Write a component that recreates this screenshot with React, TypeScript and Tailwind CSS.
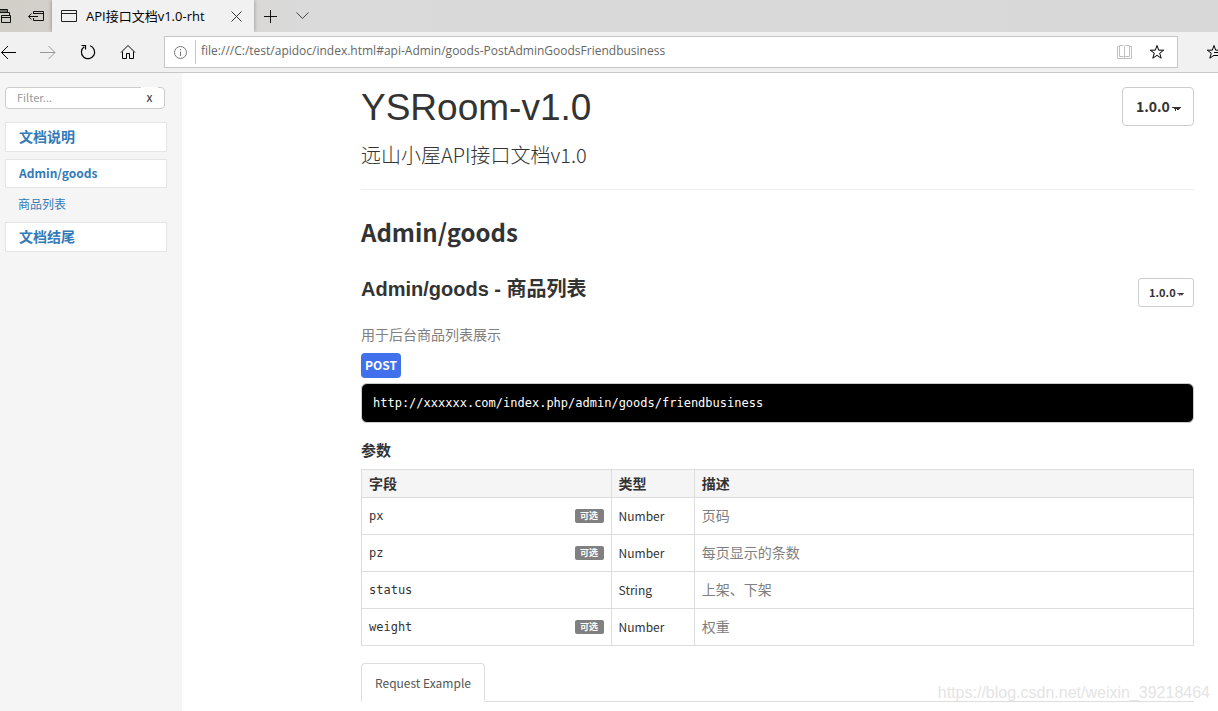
import React, { useState } from "react";

const params = [
  { field: "px", optional: true, type: "Number", desc: "页码" },
  { field: "pz", optional: true, type: "Number", desc: "每页显示的条数" },
  { field: "status", optional: false, type: "String", desc: "上架、下架" },
  { field: "weight", optional: true, type: "Number", desc: "权重" },
];

const Caret: React.FC<{ className: string }> = ({ className }) => (
  <svg
    className={`pointer-events-none absolute top-1/2 ${className}`}
    viewBox="0 0 9 4"
    fill="#333"
  >
    <path d="M0 0h9v1H8v1H7v1H5V2H4v2H3V2H2V1H0z" />
  </svg>
);

const TabStrip: React.FC = () => (
  <div className="flex h-8 bg-gradient-to-r from-[#d2cec8] via-[#dadada] via-25% to-[#d8d8d8]">
    <div className="flex w-[52px] items-center justify-between pr-2">
      <button aria-label="Tabs you set aside">
        <svg width="12" height="16" viewBox="0 0 12 16" fill="none" stroke="#111">
          <path d="M0 1.5h7.5v3M0 4.5h9.5v3M0 3h7M1.5 7.5h9v7h-9zM1.5 9.5h9" />
        </svg>
      </button>
      <button aria-label="Set these tabs aside">
        <svg width="16" height="12" viewBox="0 0 16 12" fill="none" stroke="#111">
          <path d="M5.500 4V1.500h10v9h-10V8M5.500 3.500h10M10 6.500H.8M3.500 3.500l-3 3 3 3" />
        </svg>
      </button>
    </div>
    <div className="flex w-[202px] items-center bg-[#f1f1f1] pl-[9px] pr-3 shadow-[0_0_4px_rgba(0,0,0,0.35)]">
      <svg width="16" height="14" viewBox="0 0 16 14" fill="none" stroke="#222">
        <path d="M.5 1.500h15v11H.5zM.5 4.500h15" />
      </svg>
      <span className="ml-[9px] flex-1 whitespace-nowrap text-[13px] leading-4 text-black">
        API接口文档v1.0-rht
      </span>
      <button aria-label="Close tab">
        <svg width="11" height="11" viewBox="0 0 11 11" stroke="#333">
          <path d="M.5.5l10 10M10.500.5l-10 10" />
        </svg>
      </button>
    </div>
    <button aria-label="New tab" className="ml-[10px]">
      <svg width="13" height="13" viewBox="0 0 13 13" stroke="#111">
        <path d="M6.500 0v13M0 6.500h13" />
      </svg>
    </button>
    <button aria-label="Tab previews" className="ml-[19px]">
      <svg width="13" height="8" viewBox="0 0 13 8" fill="none" stroke="#444">
        <path d="M.5.5l6 6 6-6" />
      </svg>
    </button>
  </div>
);

const Toolbar: React.FC = () => (
  <div className="relative flex h-[41px] items-center border-b border-[#c8c8c8] bg-[#f1f1f1]">
    <div className="flex w-[164px] items-center">
      <button aria-label="Back">
        <svg width="16" height="14" viewBox="0 0 16 14" fill="none" stroke="#000">
          <path d="M16 7.500H1.500M8 1L1.500 7.500 8 14" />
        </svg>
      </button>
      <button aria-label="Forward" className="ml-6">
        <svg width="16" height="14" viewBox="0 0 16 14" fill="none" stroke="#999">
          <path d="M0 7.500h15M8.500 1L15 7.500 8.500 14" />
        </svg>
      </button>
      <button aria-label="Refresh" className="ml-6">
        <svg width="16" height="16" viewBox="0 0 16 16" fill="none" stroke="#000" strokeWidth="1.2">
          <path d="M10 1.800A6.600 6.600 0 1 1 4.200 2.700M5.500 5.500V1.500H1.500" />
        </svg>
      </button>
      <button aria-label="Home" className="ml-6">
        <svg width="16" height="16" viewBox="0 0 16 16" fill="none" stroke="#000">
          <path d="M1 8.500l7-7 7 7M2.500 7.500v7h4v-5h3v5h4v-7" />
        </svg>
      </button>
    </div>
    <div className="flex h-8 min-w-0 flex-1 items-center border border-[#c6c6c6] bg-white">
      <svg className="ml-[9px]" width="13" height="13" viewBox="0 0 13 13" fill="none" stroke="#777">
        <circle cx="6.500" cy="6.500" r="6" />
        <path d="M6.500 5.500V10M6.500 3v1.200" />
      </svg>
      <input
        aria-label="Address"
        className="ml-2 h-6 min-w-0 flex-1 border-l border-[#c6c6c6] pb-1 pl-[5px] text-[12px] leading-5 text-[#666] outline-none"
        defaultValue="file:///C:/test/apidoc/index.html#api-Admin/goods-PostAdminGoodsFriendbusiness"
      />
      <button aria-label="Reading view">
        <svg width="15" height="14" viewBox="0 0 15 14" fill="none" stroke="#c0c0c0">
          <path d="M2.500.5h4l1 1 1-1h4v11h-4l-1 1-1-1h-4zM7.500 1.500v11M2.500 1.500h-2v12h14v-12h-2" />
        </svg>
      </button>
      <button aria-label="Add to favorites" className="ml-[17px] mr-3">
        <svg width="16" height="16" viewBox="0 0 16 16" fill="none" stroke="#000">
          <path d="M8 1.500l1.700 4.700h5L10.700 9.200l1.500 5L8 11.300l-4.200 2.900 1.500-5L1.300 6.200h5z" />
        </svg>
      </button>
    </div>
    <div className="flex w-10 justify-end overflow-hidden">
      <svg width="12" height="16" viewBox="0 0 12 16" fill="none" stroke="#000">
        <path d="M12 6.200H9.700L8 1.500 6.300 6.200h-5L5.300 9.200l-1.500 5L8 11.300M8 8.500h4M8 11.500h4" />
      </svg>
    </div>
  </div>
);

const Sidebar: React.FC = () => {
  const [filter, setFilter] = useState("");

  return (
    <nav className="w-[182px] shrink-0 bg-[#f5f5f5] pl-[5px] pt-[14px] font-['Noto_Sans_CJK_SC',sans-serif] text-[#337ab7]">
      <div className="relative w-40">
        <input
          aria-label="Filter"
          placeholder="Filter..."
          value={filter}
          onChange={(e) => setFilter(e.target.value)}
          className="block h-[22px] w-full rounded border border-[#ccc] bg-white pb-0.5 pl-[11px] pr-6 text-[11px] text-[#555] outline-none placeholder:text-[#999]"
        />
        <button
          onClick={() => setFilter("")}
          className="absolute right-[7px] top-0 h-5 w-[17px] bg-white text-[12px] leading-5 text-[#333]"
        >
          x
        </button>
      </div>
      <ul className="mt-[13px] w-[162px]">
        <li className="border border-[#e5e5e5] bg-white">
          <a href="#api-_header" className="block pb-0.5 pl-[13px] text-[14px] font-bold leading-[26px]">
            文档说明
          </a>
        </li>
        <li className="mt-[7px] border border-[#e5e5e5] bg-white">
          <a href="#api-Admin/goods" className="block pb-px pl-[13px] text-[12px] font-bold leading-[26px]">
            Admin/goods
          </a>
        </li>
        <li>
          <a href="#api-Admin/goods-list" className="block pb-0.5 pl-[13px] text-[12px] leading-8">
            商品列表
          </a>
        </li>
        <li className="border border-[#e5e5e5] bg-white">
          <a href="#api-_footer" className="block pb-0.5 pl-[13px] text-[14px] font-bold leading-[26px]">
            文档结尾
          </a>
        </li>
      </ul>
    </nav>
  );
};

const ParamTable: React.FC = () => (
  <table className="w-full table-fixed border-collapse text-[12px] leading-5">
    <thead>
      <tr className="bg-[#f5f5f5] text-left text-[14px]">
        <th className="h-7 w-[30%] border border-[#ddd] px-[7px] pb-0.5">字段</th>
        <th className="w-[10%] border border-[#ddd] px-[7px] pb-0.5">类型</th>
        <th className="w-[60%] border border-[#ddd] px-[7px] pb-0.5">描述</th>
      </tr>
    </thead>
    <tbody>
      {params.map((p) => (
        <tr key={p.field}>
          <td className="h-[37px] border border-[#ddd] px-[7px]">
            <div className="flex items-center justify-between">
              <code className="font-['DejaVu_Sans_Mono',monospace] text-[12px]">{p.field}</code>
              {p.optional && (
                <span className="h-[14px] w-[29px] rounded-xs bg-[#808080] text-center text-[9px] font-bold leading-[14px] text-white">
                  可选
                </span>
              )}
            </div>
          </td>
          <td className="border border-[#ddd] px-[7px]">{p.type}</td>
          <td className="border border-[#ddd] px-[7px] pb-0.5 text-[14px] text-[#808080]">{p.desc}</td>
        </tr>
      ))}
    </tbody>
  </table>
);

const Content: React.FC = () => (
  <main className="min-w-0 flex-1 pl-[179px] pr-6 pt-[14px] font-['Noto_Sans_CJK_SC',sans-serif] text-[#333]">
    <header className="flex items-start justify-between border-b border-[#eee] pb-5">
      <div>
        <h1 className="font-['Liberation_Sans',sans-serif] text-[37px] leading-[42px]">YSRoom-v1.0</h1>
        <h2 className="mt-3 text-[20px] font-light leading-7">远山小屋API接口文档v1.0</h2>
      </div>
      <div className="relative">
        <select
          aria-label="Version"
          className="h-[39px] w-[72px] appearance-none rounded border border-[#ccc] bg-white pl-[13px] text-[14px] font-bold outline-none"
        >
          <option>1.0.0</option>
        </select>
        <Caret className="right-[13px] h-1 w-[9px]" />
      </div>
    </header>

    <section>
      <h1 className="mt-[23px] text-[24px] font-bold leading-[38px]">Admin/goods</h1>
      <div className="mt-[27px] flex items-start justify-between">
        <h2 className="font-['Liberation_Sans','Noto_Sans_CJK_SC',sans-serif] text-[20px] font-bold leading-[22px]">
          Admin/goods - 商品列表
        </h2>
        <div className="relative">
          <select
            aria-label="Method version"
            className="block h-[29px] w-14 appearance-none rounded-[3px] border border-[#ccc] bg-white pl-[10px] text-[11px] font-bold outline-none"
          >
            <option>1.0.0</option>
          </select>
          <Caret className="right-[10px] h-[3px] w-[7px]" />
        </div>
      </div>
      <p className="mt-[17px] text-[14px] leading-5 text-[#808080]">用于后台商品列表展示</p>
      <div className="mt-[9px] flex">
        <span className="rounded bg-[#4070ec] px-1 pb-px text-[12px] font-bold leading-6 text-white">
          POST
        </span>
      </div>
      <pre className="mt-[5px] rounded-md border border-[#ccc] bg-black px-[11px] py-[9px] font-['DejaVu_Sans_Mono',monospace] text-[12px] leading-5 text-white">
        http://xxxxxx.com/index.php/admin/goods/friendbusiness
      </pre>
      <h3 className="mb-[9px] mt-[17px] text-[15px] font-bold leading-5">参数</h3>
      <ParamTable />
      <div className="mt-[17px] flex border-b border-[#ddd]">
        <a
          href="#request-example"
          className="-mb-px rounded-t border border-[#ddd] border-b-white bg-white px-[13px] text-[12px] leading-[37px] text-[#555]"
        >
          Request Example
        </a>
      </div>
    </section>
  </main>
);

const App: React.FC = () => {
  return (
    <div className="relative flex min-h-screen flex-col overflow-hidden bg-white font-['Open_Sans','Noto_Sans_CJK_SC',sans-serif]">
      <TabStrip />
      <Toolbar />
      <div className="flex flex-1">
        <Sidebar />
        <Content />
      </div>
      <span className="pointer-events-none absolute bottom-2 right-2 font-['Liberation_Sans',sans-serif] text-[16px] leading-5 text-[#e4e4e4]">
        https://blog.csdn.net/weixin_39218464
      </span>
    </div>
  );
};

export default App;
